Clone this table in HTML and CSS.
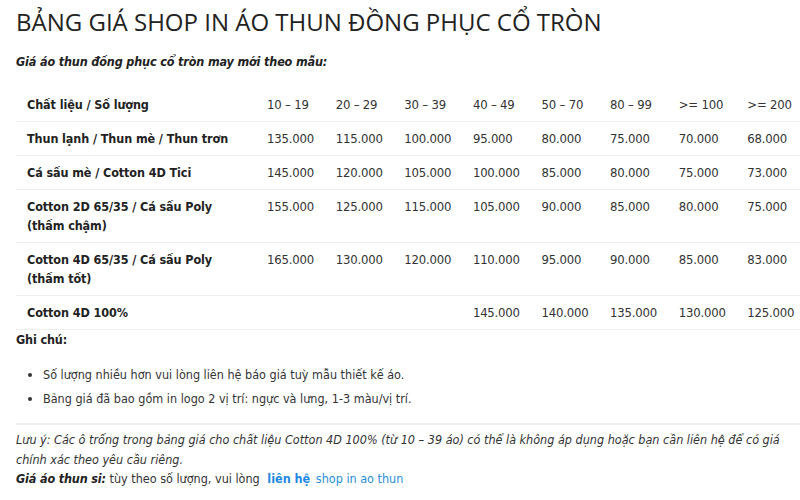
FILE: index.html
```html
<!DOCTYPE html>
<html lang="vi">
<head>
<meta charset="utf-8">
<link rel="stylesheet" href="styles.css">
</head>
<body>
<div class="page">
  <h1 class="title">BẢNG GIÁ SHOP IN ÁO THUN ĐỒNG PHỤC CỔ TRÒN</h1>
  <p class="lead"><strong><em>Giá áo thun đồng phục cổ tròn may mới theo mẫu:</em></strong></p>
  <table class="price">
    <colgroup>
      <col class="c-name"><col class="c-n"><col class="c-n"><col class="c-n"><col class="c-n"><col class="c-n"><col class="c-n"><col class="c-n"><col class="c-n">
    </colgroup>
    <tr><th>Chất liệu / Số lượng</th><td>10 – 19</td><td>20 – 29</td><td>30 – 39</td><td>40 – 49</td><td>50 – 70</td><td>80 – 99</td><td>&gt;= 100</td><td>&gt;= 200</td></tr>
    <tr><th>Thun lạnh / Thun mè / Thun trơn</th><td>135.000</td><td>115.000</td><td>100.000</td><td>95.000</td><td>80.000</td><td>75.000</td><td>70.000</td><td>68.000</td></tr>
    <tr><th>Cá sấu mè / Cotton 4D Tici</th><td>145.000</td><td>120.000</td><td>105.000</td><td>100.000</td><td>85.000</td><td>80.000</td><td>75.000</td><td>73.000</td></tr>
    <tr><th>Cotton 2D 65/35 / Cá sấu Poly (thấm chậm)</th><td>155.000</td><td>125.000</td><td>115.000</td><td>105.000</td><td>90.000</td><td>85.000</td><td>80.000</td><td>75.000</td></tr>
    <tr><th>Cotton 4D 65/35 / Cá sấu Poly (thấm tốt)</th><td>165.000</td><td>130.000</td><td>120.000</td><td>110.000</td><td>95.000</td><td>90.000</td><td>85.000</td><td>83.000</td></tr>
    <tr><th>Cotton 4D 100%</th><td></td><td></td><td></td><td>145.000</td><td>140.000</td><td>135.000</td><td>130.000</td><td>125.000</td></tr>
  </table>
  <p class="note-title"><strong>Ghi chú:</strong></p>
  <ul class="notes">
    <li>Số lượng nhiều hơn vui lòng liên hệ báo giá tuỳ mẫu thiết kế áo.</li>
    <li>Bảng giá đã bao gồm in logo 2 vị trí: ngực và lưng, 1-3 màu/vị trí.</li>
  </ul>
  <hr class="sep">
  <p class="remark"><em>Lưu ý: Các ô trống trong bảng giá cho chất liệu Cotton 4D 100% (từ 10 – 39 áo) có thể là không áp dụng hoặc bạn cần liên hệ để có giá chính xác theo yêu cầu riêng.</em><br><strong><em>Giá áo thun si:</em></strong> tùy theo số lượng, vui lòng <a class="link-strong" href="#">liên hệ</a> <a class="link" href="#">shop in ao thun</a></p>
</div>
</body>
</html>
```

FILE: styles.css
```css
html, body {
  margin: 0;
  padding: 0;
  background: #fff;
  overflow: hidden;
}
body {
  font-family: "DejaVu Sans Condensed", "DejaVu Sans", sans-serif;
  font-size: 12.5px;
  color: #333;
}
strong {
  letter-spacing: -0.15px;
}
.page {
  padding: 0 0 0 16px;
  width: 800px;
}
.title {
  font-family: "Open Sans", "Noto Sans", sans-serif;
  font-weight: 400;
  font-size: 24px;
  color: #222;
  margin: 0;
  padding-top: 5px;
  line-height: 34px;
}
.lead {
  margin: 13px 0 0;
  line-height: 19px;
  color: #222;
}
.price {
  border-collapse: collapse;
  table-layout: fixed;
  width: 790px;
  margin-top: 17px;
}
.c-name { width: 241px; }
.c-n { width: 68.6px; }
.price th, .price td {
  text-align: left;
  vertical-align: top;
  padding: 7px 0 7px 11px;
  line-height: 19px;
  border-bottom: 1px solid #eee;
}
.price th {
  font-weight: 700;
  letter-spacing: -0.1px;
  color: #222;
  padding-right: 15px;
}
.price td {
  padding-left: 10px;
  font-size: 13px;
  letter-spacing: -0.2px;
  white-space: nowrap;
}
.note-title {
  margin: 0;
  line-height: 19px;
  color: #222;
}
.notes {
  margin: 16px 0 0;
  padding-left: 27px;
}
.notes li {
  line-height: 19px;
  margin-bottom: 5px;
}
.sep {
  border: 0;
  border-top: 2px solid #eee;
  margin: 15px 0 0;
}
.remark {
  margin: 5px 0 0;
  line-height: 19.5px;
  padding-right: 16px;
}
.remark strong { color: #222; }
.link-strong {
  color: #1e88e5;
  font-weight: 700;
  text-decoration: none;
  margin-left: 4px;
}
.link {
  color: #2a8fd8;
  text-decoration: none;
  margin-left: 2px;
}
```
